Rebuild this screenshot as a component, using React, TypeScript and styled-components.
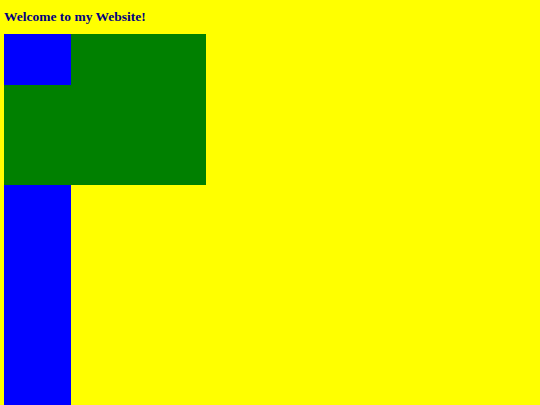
import React from "react";
import styled, { createGlobalStyle } from "styled-components";

const Global = createGlobalStyle`
  html, body { margin: 0; padding: 0; background: #ffff00; overflow: hidden; }
  body { height: 405px; }
`;

const Page = styled.div`
  padding: 0 0 0 3.5px;
  font-family: "Liberation Serif", "Times New Roman", serif;
`;

const Title = styled.h1`
  margin: 0;
  padding: 8.5px 0 0 0.5px;
  height: 33.5px;
  box-sizing: border-box;
  font-size: 13.5px;
  font-weight: bold;
  line-height: 16px;
  color: #000080;
`;

const Layout = styled.div`
  display: grid;
  grid-template-columns: 67px 135px;
  grid-template-rows: 51.5px 100px 300px;
`;

const Cell = styled.div<{ $color: string; $span?: boolean }>`
  background: ${(p) => p.$color};
  grid-column: ${(p) => (p.$span ? "1 / 3" : "auto")};
`;

export default function App() {
  return (
    <>
      <Global />
      <Page>
        <Title>Welcome to my Website!</Title>
        <Layout>
          <Cell $color="#0000ff" />
          <Cell $color="#008000" />
          <Cell $color="#008000" $span />
          <Cell $color="#0000ff" />
        </Layout>
      </Page>
    </>
  );
}
